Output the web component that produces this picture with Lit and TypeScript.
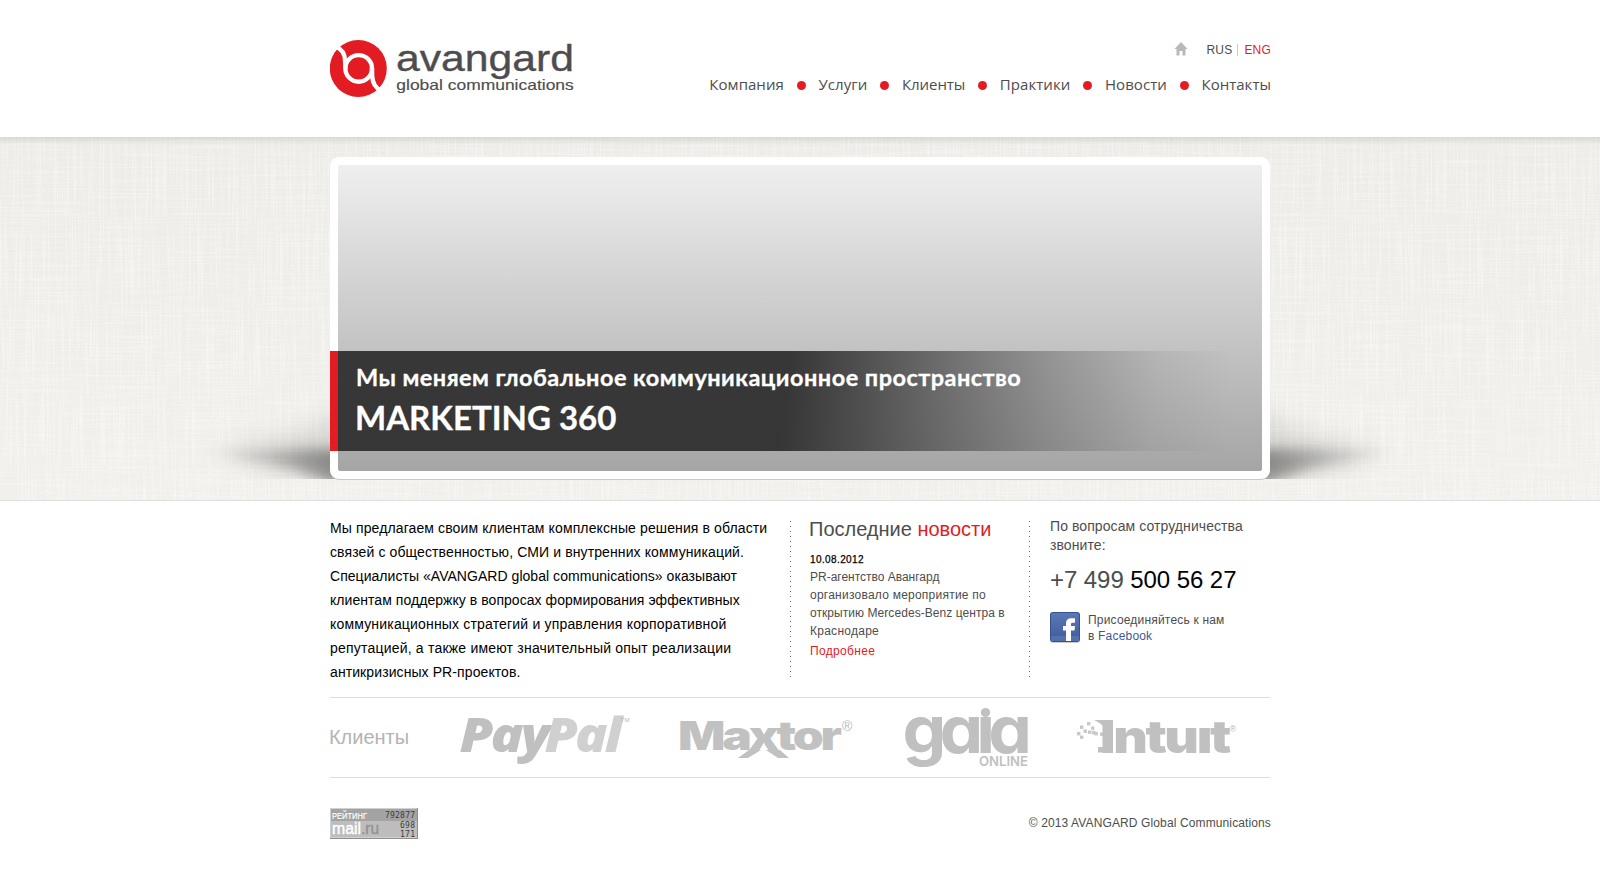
import { LitElement, html, css, svg } from "lit";
import { customElement } from "lit/decorators.js";

// Each line carries its own tracking in px.
type Line = [string, number];
const NAV: Line[] = [
  ["Компания", 0.04], ["Услуги", 0.08], ["Клиенты", -0.08],
  ["Практики", 0.05], ["Новости", 0.07], ["Контакты", 0.01],
];
const ABOUT: Line[] = [
  ["Мы предлагаем своим клиентам комплексные решения в области", 0.117],
  ["связей с общественностью, СМИ и внутренних коммуникаций.", 0.115],
  ["Специалисты «AVANGARD global communications» оказывают", 0.042],
  ["клиентам поддержку в вопросах формирования эффективных", 0.05],
  ["коммуникационных стратегий и управления корпоративной", 0.177],
  ["репутацией, а также имеют значительный опыт реализации", 0.204],
  ["антикризисных PR-проектов.", 0.092],
];
const NEWS: Line[] = [
  ["PR-агентство Авангард", -0.01], ["организовало мероприятие по", 0.237],
  ["открытию Mercedes-Benz центра в", 0.06], ["Краснодаре", 0.26],
];
const PIXELS = [[1087, 722], [1080, 725.5], [1091, 726.5], [1083.5, 729.5], [1088, 730.5], [1077, 732], [1092, 731], [1080, 735.5], [1094.5, 732], [1100, 732.5]];

@customElement("app-root")
export class AppRoot extends LitElement {
  static styles = css`
    :host { display: block; width: 1600px; height: 870px; background: #fff; overflow: hidden; font-family: "Liberation Sans", Arial, sans-serif; color: #4d4d4d; }
    .f { white-space: nowrap; display: inline-block; }
    .wrap { width: 940px; margin: 0 auto; }
    header { height: 137px; display: flex; justify-content: space-between; }
    .brand { margin-top: 36px; width: 250px; height: 68px; display: block; }
    .head-right { display: flex; flex-direction: column; align-items: flex-end; padding-top: 42px; }
    .lang { display: flex; align-items: center; font-size: 12px; line-height: 16px; height: 16px; letter-spacing: .2px; margin-right: -1px; }
    .home { width: 14px; height: 14px; margin: -2px 18px 0 0; }
    .pipe { width: 1px; height: 12px; background: #ccc; margin: 0 6px 0 5px; }
    .red { color: #e31b23; }
    nav { display: flex; align-items: center; gap: 12.8px; margin-top: 15px; font: 15px/22px "Open Sans", sans-serif; margin-right: -1px; }
    .dot { width: 9px; height: 9px; border-radius: 50%; background: #e31b23; position: relative; top: 1px; }
    .hero { height: 363px; border-bottom: 1px solid #dfdfe1; background: linear-gradient(#edece8, #f1f0ec); position: relative; }
    .linen { position: absolute; inset: 0; width: 100%; height: 363px; }
    .stage { padding-top: 20px; }
    .frame { position: relative; height: 306px; border: 8px solid #fff; border-radius: 9px; background: #fff; width: 924px; box-shadow: 0 1px 0 #c9c9c5; }
    .slide { height: 306px; border-radius: 2px; background: linear-gradient(#efefef, #a5a5a5); display: flex; flex-direction: column; justify-content: flex-end; }
    .banner { margin: 0 0 20px -8px; height: 100px; border-left: 8px solid #e31b23; box-sizing: border-box; width: 932px; color: #fff; font-family: Lato, "Open Sans", sans-serif; font-weight: 700; padding-left: 18px;
      background: linear-gradient(97deg, rgba(48,48,48,.95) 0, rgba(48,48,48,.95) 49%, rgba(54,54,54,.8) 57%, rgba(64,64,64,.62) 66%, rgba(80,80,80,.38) 77%, rgba(110,110,110,.14) 88%, rgba(150,150,150,0) 96%); background-origin: border-box; }
    .l1 { font-size: 23.5px; line-height: 26px; padding-top: 13px; letter-spacing: .46px; -webkit-text-stroke: .3px #fff; }
    .l2 { font-size: 33px; line-height: 40px; padding-top: 7px; margin-left: -1px; -webkit-text-stroke: .3px #fff; }
    .info { display: grid; grid-template-columns: 460px 239px 241px; padding-top: 20px; height: 157px; align-items: start; }
    .about { font-size: 14px; line-height: 24px; color: #000; margin-top: -5px; }
    .col { height: 157px; padding-left: 20px; background: repeating-linear-gradient(#666 0 1px, transparent 1px 5px) 0 0 / 1px 100% no-repeat; }
    .contact { padding-left: 21px; }
    .title { font-size: 20px; line-height: 24px; margin: -4px 0 0 -1px; }
    .date { font-size: 10px; line-height: 14px; color: #000; margin-top: 12px; letter-spacing: .39px; -webkit-text-stroke: .25px #000; }
    .news { font-size: 12px; line-height: 18px; margin-top: 1px; }
    .more { font-size: 12px; line-height: 18px; margin-top: 2px; letter-spacing: .33px; }
    .ask { font-size: 14px; line-height: 19px; margin-top: -4px; letter-spacing: .08px; }
    .phone { font-size: 24px; line-height: 28px; margin-top: 11px; letter-spacing: -.07px; }
    .black { color: #000; }
    .fb { display: flex; gap: 8px; margin-top: 16px; font-size: 12px; line-height: 16px; letter-spacing: .19px; }
    .fb svg { width: 30px; height: 32px; margin-top: 2px; }
    .fb-text { padding-top: 2px; }
    .blue { color: #3b5998; }
    .clients { margin-top: 19px; height: 79px; border-top: 1px solid #dedede; border-bottom: 1px solid #dedede; }
    .clients svg { display: block; width: 940px; height: 79px; overflow: visible; }
    .single-storey { font-feature-settings: "cv11"; }
    footer { display: flex; justify-content: space-between; padding-top: 30px; font-size: 12px; }
    .counter { width: 88px; height: 31px; }
    .copy { line-height: 31px; letter-spacing: .12px; margin-right: -1px; }
  `;
  line([text, tracking]: Line) {
    return html`<span class="f" style="letter-spacing:${tracking}px">${text}</span>`;
  }
  render() {
    return html`
      <header class="wrap">
        <svg class="brand" viewBox="330 36 250 68">
          <circle cx="358.3" cy="68.5" r="28.5" fill="#e31b23"/>
          <g fill="none" stroke="#fff" stroke-width="4.4"><circle cx="358.7" cy="68.4" r="13.3"/>
            <path d="M335 46.5C342.500 49 345 54 345.100 61L345.400 69M372 68L372.200 76C372.500 83 375 88 381.500 91"/></g>
          <g fill="#4d4d4f" stroke="#4d4d4f" stroke-width=".35">
            <text x="396" y="71" font-size="36" textLength="178" lengthAdjust="spacingAndGlyphs">avangard</text>
            <text x="396.300" y="89.700" font-size="14.600" textLength="177.500" lengthAdjust="spacingAndGlyphs" stroke-width=".15">global communications</text>
          </g>
        </svg>
        <div class="head-right">
          <div class="lang">
            <svg class="home" viewBox="0 0 14 14"><path d="M7 0 .5 7H2.500V13.500H5.500V9H8.500V13.500H11.500V7H13.500Z" fill="#b9b9b9"/></svg>
            <span>RUS</span><span class="pipe"></span><span class="red">ENG</span>
          </div>
          <nav>${NAV.map((item, i) => html`${i ? html`<span class="dot"></span>` : ""}${this.line(item)}`)}</nav>
        </div>
      </header>
      <section class="hero">
        <svg class="linen">
          <defs>
            <filter id="v" x="0" y="0" width="100%" height="100%"><feTurbulence type="fractalNoise" baseFrequency=".6 .012" numOctaves="2" seed="3"/><feColorMatrix values="0 0 0 0 1  0 0 0 0 1  0 0 0 0 1  4 0 0 0 -1.9"/></filter>
            <filter id="w" x="0" y="0" width="100%" height="100%"><feTurbulence type="fractalNoise" baseFrequency=".012 .6" numOctaves="2" seed="21"/><feColorMatrix values="0 0 0 0 1  0 0 0 0 1  0 0 0 0 1  4 0 0 0 -1.9"/></filter>
            <filter id="h" x="0" y="0" width="100%" height="100%"><feTurbulence type="fractalNoise" baseFrequency=".4 .5" numOctaves="2" seed="8"/><feColorMatrix values="0 0 0 0 .78  0 0 0 0 .77  0 0 0 0 .7  4 0 0 0 -2"/></filter>
            <filter id="b" x="-30%" y="-80%" width="160%" height="260%"><feGaussianBlur stdDeviation="6"/></filter>
            <filter id="b2" x="-30%" y="-60%" width="160%" height="220%"><feGaussianBlur stdDeviation="14"/></filter>
            <linearGradient id="t" x2="0" y2="1"><stop offset="0" stop-color="#000" stop-opacity=".09"/><stop offset="1" stop-color="#000" stop-opacity="0"/></linearGradient>
            <linearGradient id="sl" gradientUnits="userSpaceOnUse" x1="205" x2="335" y1="0" y2="0"><stop offset="0" stop-opacity="0.05"/><stop offset=".5" stop-opacity=".15"/><stop offset="1" stop-opacity=".36"/></linearGradient>
            <linearGradient id="sr" gradientUnits="userSpaceOnUse" x1="1395" x2="1265" y1="0" y2="0"><stop offset="0" stop-opacity="0.05"/><stop offset=".5" stop-opacity=".15"/><stop offset="1" stop-opacity=".36"/></linearGradient>
            <clipPath id="c"><rect width="1600" height="342"/></clipPath>
          </defs>
          <rect width="1600" height="363" filter="url(#v)" opacity=".34"/>
          <rect width="1600" height="363" filter="url(#w)" opacity=".26"/>
          <rect width="1600" height="363" filter="url(#h)" opacity=".14"/>
          <rect width="1600" height="8" fill="url(#t)"/>
          <g clip-path="url(#c)">
            <path d="M345 265 320 295 220 318 345 345ZM1255 265 1280 295 1380 318 1255 345Z" opacity=".14" filter="url(#b2)"/>
            <path d="M345 312 205 314 290 332 345 350Z" fill="url(#sl)" filter="url(#b)"/>
            <path d="M1255 312 1395 314 1310 332 1255 350Z" fill="url(#sr)" filter="url(#b)"/>
          </g>
        </svg>
        <div class="wrap stage"><div class="frame"><div class="slide"><div class="banner">
          <div class="l1"><span class="f">Мы меняем глобальное коммуникационное пространство</span></div>
          <div class="l2"><span class="f">MARKETING 360</span></div>
        </div></div></div></div>
      </section>
      <main class="wrap">
        <div class="info">
          <div class="about">${ABOUT.map((l) => html`<div>${this.line(l)}</div>`)}</div>
          <div class="col">
            <div class="title"><span class="f">Последние <span class="red">новости</span></span></div>
            <div class="date">10.08.2012</div>
            <div class="news">${NEWS.map((l) => html`<div>${this.line(l)}</div>`)}</div>
            <div class="more red">Подробнее</div>
          </div>
          <div class="col contact">
            <div class="ask">По вопросам сотрудничества<br>звоните:</div>
            <div class="phone"><span class="f">+7 499 <span class="black">500 56 27</span></span></div>
            <div class="fb">
              <svg viewBox="0 0 30 32"><defs><linearGradient id="fg" x2="0" y2="1"><stop offset="0" stop-color="#5b78b5"/><stop offset="1" stop-color="#3e5c9d"/></linearGradient></defs>
                <rect y="1" width="30" height="30" rx="3" fill="#ccc"/><rect width="30" height="30" rx="3" fill="#35528f"/><rect x="1" y="1" width="28" height="28" rx="2" fill="url(#fg)"/><rect x="1" y="24" width="28" height="5" fill="#5571ad"/>
                <path d="M16 29V18.500H13V14H16V12C16 8 18 6.300 21.500 6.300H25V10.700H22.700C21.300 10.700 21 11.300 21 12.500V14H25L24.500 18.500H21V29Z" fill="#fff"/></svg>
              <div class="fb-text">Присоединяйтесь к нам<br>в <span class="blue">Facebook</span></div>
            </div>
          </div>
        </div>
        <div class="clients">
          <svg viewBox="330 698 940 79">
            <text x="329" y="744" font-size="20" textLength="80" fill="#b4b4b4">Клиенты</text>
            <g font-family="Open Sans" font-weight="800" font-style="italic" font-size="47.500" letter-spacing="-2.500">
              <text x="459.500" y="752" textLength="88" lengthAdjust="spacingAndGlyphs" fill="#c0c0c0">Pay</text>
              <text x="544.500" y="752" textLength="75" lengthAdjust="spacingAndGlyphs" fill="#d0d0d0">Pal</text></g>
            <text x="620.500" y="722" font-size="6" textLength="9" fill="#b8b8b8">TM</text>
            <text x="678" y="750" font-family="Inter" font-weight="900" font-size="40" letter-spacing="-2.500" textLength="161" lengthAdjust="spacingAndGlyphs" fill="#c1c1c1">Maxtor</text>
            <path d="M749 750 738 758H748L761 750ZM766 750 778 758H789L780 750Z" fill="#c1c1c1"/>
            <text x="842" y="731" font-size="14" fill="#b8b8b8">®</text>
            <text class="single-storey" transform="translate(902.500 752.500) scale(1.05 1)" font-family="Inter" font-weight="700" font-size="66" letter-spacing="-6.500" fill="#c0c0c0">gaıa</text>
            <circle cx="985.500" cy="712.500" r="4.600" fill="#c0c0c0"/>
            <text x="979" y="766" font-family="Inter" font-weight="600" font-size="13.500" textLength="49" lengthAdjust="spacingAndGlyphs" fill="#c0c0c0">ONLINE</text>
            ${PIXELS.map(([x, y]) => svg`<rect x=${x} y=${y} width="3.400" height="3.400" fill="#c8c8c8"/>`)}
            <text x="1100" y="752.500" font-family="Inter" font-weight="900" font-size="45" letter-spacing="-2" textLength="129" lengthAdjust="spacingAndGlyphs" fill="#c0c0c0">Intuıt</text>
            <path d="M1094 720H1113V752.500H1098V747H1106L1107 741H1109C1107 735 1108 726 1094 720Z" fill="#c0c0c0"/>
            <text x="1229.500" y="732" font-size="9" fill="#b8b8b8">®</text>
          </svg>
        </div>
      </main>
      <footer class="wrap">
        <svg class="counter" viewBox="0 0 88 31">
          <rect width="88" height="31" fill="#8e8e8e"/><rect width="87" height="30" fill="#d0d0d0"/><rect x="1" y="1" width="86" height="12" fill="#a3a3a3"/><rect x="1" y="13" width="86" height="16" fill="#bdbdbd"/>
          <text x="2" y="10.500" font-size="9.500" textLength="35" lengthAdjust="spacingAndGlyphs" fill="#fff" stroke="#fff" stroke-width=".2">РЕЙТИНГ</text>
          <g font-family="DejaVu Sans Mono" font-size="8" fill="#3a3a3a"><text x="55" y="10" textLength="30">792877</text><text x="70" y="20" textLength="15">698</text><text x="70" y="28.500" textLength="15">171</text></g>
          <g font-size="16" stroke-width=".4"><text x="2" y="26" textLength="29" lengthAdjust="spacingAndGlyphs" fill="#fff" stroke="#fff">mail</text><text x="31" y="26" textLength="18" lengthAdjust="spacingAndGlyphs" fill="#929292" stroke="#929292">.ru</text></g>
        </svg>
        <div class="copy">© 2013 AVANGARD Global Communications</div>
      </footer>`;
  }
}
